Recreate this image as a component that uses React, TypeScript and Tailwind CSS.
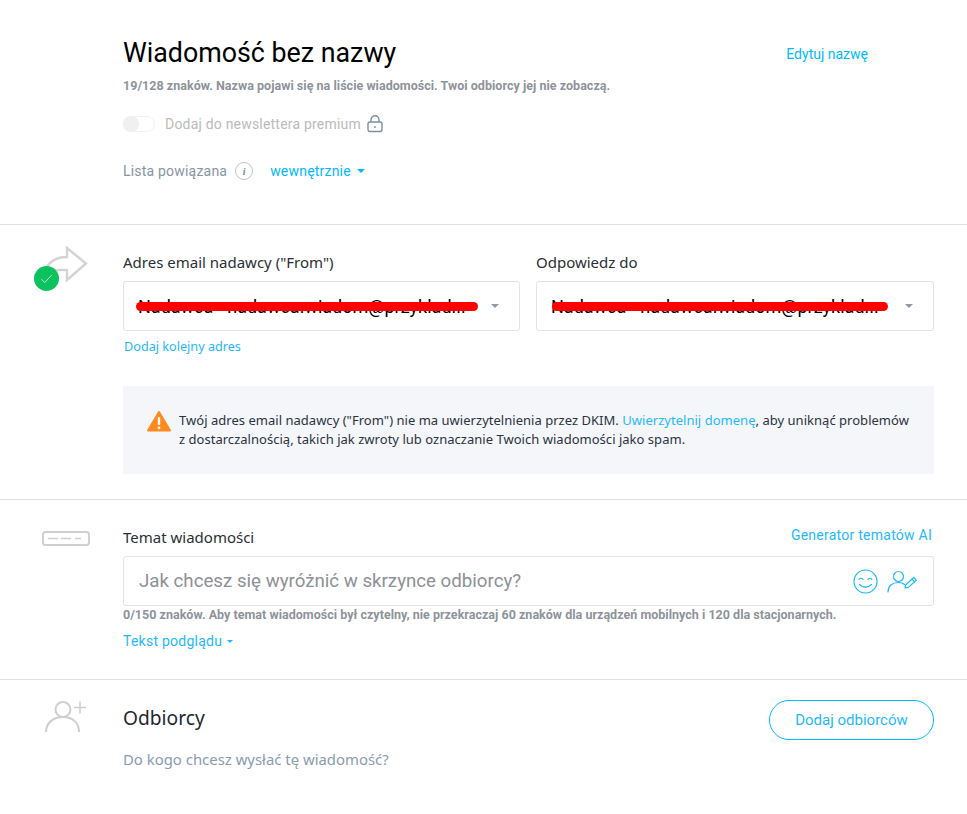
import React from "react";

const roboto = "font-['Roboto',sans-serif]";
const noto = "font-['Noto_Sans',sans-serif]";

function Caret({ color = "#00baff", small = false }: { color?: string; small?: boolean }) {
  return small ? (
    <svg width="6" height="3" viewBox="0 0 6 3" className="shrink-0">
      <path d="M0 0h6L3 3z" fill={color} />
    </svg>
  ) : (
    <svg width="8" height="4" viewBox="0 0 8 4" className="shrink-0">
      <path d="M0 0h8L4 4z" fill={color} />
    </svg>
  );
}

function SenderSelect({ width, lineWidth, lineLeft }: { width: string; lineWidth: string; lineLeft: string }) {
  return (
    <div className={`${width} h-[50px] relative flex items-center justify-between border border-[#e3e3e3] rounded-[3px] bg-white pl-[14px] pr-[20px]`}>
      <span className={`${roboto} text-[18px] text-black whitespace-nowrap`}>
        Nadawca - nadawca.wiadom@przyklad...
      </span>
      <Caret color="#8b99a8" />
      <span className={`absolute top-[20px] h-[9px] rounded-full bg-[#ff0000] ${lineLeft} ${lineWidth}`} />
    </div>
  );
}

export default function App() {
  return (
    <div className={`w-[967px] h-[814px] bg-white overflow-hidden ${roboto}`}>
      {/* Name section */}
      <section className="h-[225px] border-b border-[#e0e0e0] pl-[123px] pr-[99px] pt-[36px]">
        <div className="flex items-start justify-between">
          <h1 className="text-[26.8px] leading-[34px] text-black">Wiadomość bez nazwy</h1>
          <a className="text-[14px] leading-[20px] text-[#00baff] mt-[8px]">Edytuj nazwę</a>
        </div>
        <p className="mt-[8px] text-[12.5px] leading-[16px] font-bold tracking-[0.03px] text-[#8e939b]">
          19/128 znaków. Nazwa pojawi się na liście wiadomości. Twoi odbiorcy jej nie zobaczą.
        </p>
        <div className="mt-[20px] flex items-center h-[20px]">
          <div className="w-[32px] h-[16px] rounded-full border border-[#f1f1f1] bg-white flex">
            <span className="w-[16px] h-[16px] -m-px rounded-full bg-[#f0f0f0]" />
          </div>
          <span className="ml-[10px] text-[14px] tracking-[0.2px] text-[#bbbbbb]">Dodaj do newslettera premium</span>
          <svg width="16" height="18" viewBox="0 0 16 18" fill="none" stroke="#7d8fa1" strokeWidth="1.4" className="ml-[6px]">
            <rect x="1" y="7" width="14" height="9.5" rx="2" />
            <path d="M4 7V4.8a4 4 0 0 1 8 0V7" />
            <circle cx="8" cy="12" r="0.9" fill="#7d8fa1" stroke="none" />
          </svg>
        </div>
        <div className="mt-[25px] flex items-center h-[24px]">
          <span className="text-[14px] tracking-[0.2px] text-[#8795a3]">Lista powiązana</span>
          <span className="ml-[8px] w-[18px] h-[18px] rounded-full border border-[#c4c4c4] flex items-center justify-center font-['Liberation_Serif',serif] italic font-bold text-[10px] text-[#7d8a97]">i</span>
          <span className="ml-[17px] text-[14px] tracking-[0.2px] text-[#00baff]">wewnętrznie</span>
          <span className="ml-[6px]"><Caret /></span>
        </div>
      </section>

      {/* Sender section */}
      <section className="h-[275px] border-b border-[#e0e0e0] flex">
        <div className="w-[123px] shrink-0 pl-[34px] pt-[21px]">
          <div className="relative w-[54px] h-[46px]">
            <svg width="54" height="46" viewBox="0 0 54 46" fill="none" stroke="#d4d4d4" strokeWidth="2.400">
              <path d="M33 2 L52 17.500 L33 34 V24 H26 C19 24 14 27 9 33 C11 19 19 11 33 11 Z" strokeLinejoin="miter" />
            </svg>
            <span className="absolute left-0 top-[20px] w-[25px] h-[25px] rounded-full bg-[#0cc25f] flex items-center justify-center">
              <svg width="13" height="10" viewBox="0 0 13 10" fill="none" stroke="#b9eccd" strokeWidth="1">
                <path d="M1.500 5.200 L4.800 8.500 L11.500 1.200" />
              </svg>
            </span>
          </div>
        </div>
        <div className="w-[811px] pt-[26px]">
          <div className="flex gap-[16px]">
            <div className="w-[397px]">
              <div className={`${noto} text-[15px] leading-[22px] text-[#2a2f35] h-[30px]`}>Adres email nadawcy ("From")</div>
              <SenderSelect width="w-[397px]" lineLeft="left-[12px]" lineWidth="w-[342px]" />
            </div>
            <div className="w-[398px]">
              <div className={`${noto} text-[15px] leading-[22px] text-[#2a2f35] h-[30px]`}>Odpowiedz do</div>
              <SenderSelect width="w-[398px]" lineLeft="left-[15px]" lineWidth="w-[336px]" />
            </div>
          </div>
          <a className={`${noto} block mt-[6px] ml-px text-[12.65px] leading-[18px] text-[#1fb9fb]`}>Dodaj kolejny adres</a>
          <div className="mt-[31px] h-[88px] bg-[#f5f6fa] pl-[24px] pr-[20px] flex items-center">
            <svg width="24" height="21" viewBox="0 0 24 21" className="shrink-0 -mt-[17px]">
              <path d="M12 1 L23 19.500 H1 Z" fill="#ff8a1f" stroke="#ff8a1f" strokeWidth="2" strokeLinejoin="round" />
              <rect x="10.800" y="6" width="2.400" height="8" rx="1" fill="#fff" />
              <circle cx="12" cy="16.800" r="1.400" fill="#fff" />
            </svg>
            <p className={`${noto} ml-[8px] text-[13px] leading-[19px] tracking-[0.025px] text-[#2a3340]`}>
              Twój adres email nadawcy ("From") nie ma uwierzytelnienia przez DKIM.{" "}
              <a className="text-[#1fb9fb]">Uwierzytelnij domenę</a>, aby uniknąć problemów<br />
              z dostarczalnością, takich jak zwroty lub oznaczanie Twoich wiadomości jako spam.
            </p>
          </div>
        </div>
      </section>

      {/* Subject section */}
      <section className="h-[180px] border-b border-[#e0e0e0] flex">
        <div className="w-[123px] shrink-0 pl-[42px] pt-[31px]">
          <svg width="48" height="15" viewBox="0 0 48 15" fill="none" stroke="#cfcfcf">
            <rect x="1" y="1" width="46" height="13" rx="2.500" strokeWidth="2" />
            <path d="M6 7.500h10M19 7.500h10M33 7.500h6" strokeWidth="1.500" />
          </svg>
        </div>
        <div className="w-[811px] pt-[26px]">
          <div className="flex items-start justify-between h-[30px]">
            <span className={`${noto} text-[15px] leading-[22px] text-[#2a2f35]`}>Temat wiadomości</span>
            <a className="text-[14px] leading-[18px] tracking-[0.25px] text-[#1fb9fb] mr-[2px]">Generator tematów AI</a>
          </div>
          <div className="h-[50px] border border-[#e3e3e3] rounded-[3px] flex items-center justify-between pl-[15px] pr-[15px]">
            <span className="text-[18.7px] text-[#8e9196]">Jak chcesz się wyróżnić w skrzynce odbiorcy?</span>
            <div className="flex items-center gap-[9px]">
              <svg width="25" height="25" viewBox="0 0 25 25" fill="none" stroke="#1fb9fb" strokeWidth="1.200" strokeLinecap="round">
                <circle cx="12.500" cy="12.500" r="11.500" />
                <path d="M6 10.500q2-2.500 4 0M15 10.500q2-2.500 4 0M6.500 15.500q6 5.500 12 0" />
              </svg>
              <svg width="31" height="23" viewBox="0 0 31 23" fill="none" stroke="#1fb9fb" strokeWidth="1.200" strokeLinecap="round" strokeLinejoin="round">
                <circle cx="11.500" cy="6.500" r="5" />
                <path d="M1 22c0-6 4-9.500 10.500-9.500 2.500 0 4.500.5 6 2" />
                <path d="M18 18l.8-3.300 8-7.200 2.500 2.700-8 7.200z" />
                <path d="M25 9.200l2.500 2.700" />
              </svg>
            </div>
          </div>
          <p className="mt-[1px] text-[12.5px] leading-[16px] font-bold text-[#8e939b] tracking-[0.02px]">
            0/150 znaków. Aby temat wiadomości był czytelny, nie przekraczaj 60 znaków dla urządzeń mobilnych i 120 dla stacjonarnych.
          </p>
          <div className="mt-[8px] flex items-center">
            <a className="text-[14px] leading-[20px] tracking-[0.25px] text-[#1fb9fb]">Tekst podglądu</a>
            <span className="ml-[5px]"><Caret small color="#1fb9fb" /></span>
          </div>
        </div>
      </section>

      {/* Recipients section */}
      <section className="flex">
        <div className="w-[123px] shrink-0 pl-[45px] pt-[20px]">
          <svg width="42" height="32" viewBox="0 0 42 32" fill="none" stroke="#cfcfcf" strokeWidth="2">
            <circle cx="18" cy="9.500" r="7.500" />
            <path d="M1 32c0-9 7-15 17-15s16 6 16 15" />
            <path d="M35 1.500v12M29 7.500h12" strokeWidth="1.600" />
          </svg>
        </div>
        <div className="w-[811px] pt-[18px] flex items-start justify-between">
          <div>
            <div className={`${noto} text-[19.2px] leading-[40px] text-[#1f2730]`}>Odbiorcy</div>
            <div className={`${noto} mt-[11px] text-[14.9px] leading-[20px] text-[#8a9bb0]`}>Do kogo chcesz wysłać tę wiadomość?</div>
          </div>
          <button className="mt-[2px] w-[165px] h-[40px] rounded-full border border-[#00baff] text-[15px] text-[#1fb9fb]">Dodaj odbiorców</button>
        </div>
      </section>
    </div>
  );
}
